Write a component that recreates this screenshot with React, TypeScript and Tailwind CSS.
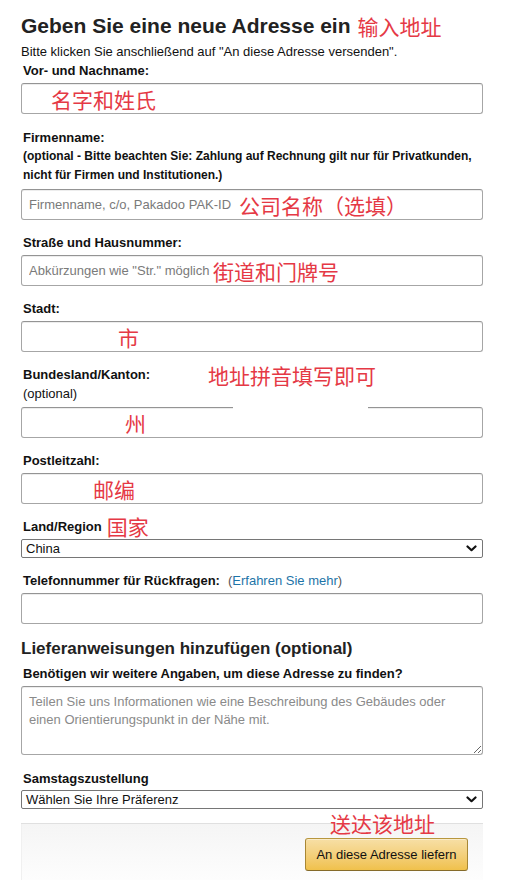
import React from "react";

const CN = "font-['Noto_Sans_CJK_SC','Noto_Sans',sans-serif] text-[#e53945] font-normal";

const inputCls =
  "block w-full h-[31px] rounded-[3px] border border-[#a6a6a6] border-t-[#949494] bg-white px-[7px] text-[13px] text-[#111] placeholder:text-[#7a7a7a] shadow-[inset_0_1px_0_rgba(0,0,0,0.07),0_1px_0_rgba(255,255,255,0.5)] outline-none";

function Chevron() {
  return (
    <svg width="11" height="7" viewBox="0 0 11 7" className="shrink-0">
      <polyline points="1.5,1.5 5.5,5.2 9.5,1.5" fill="none" stroke="#111" strokeWidth="2.2" strokeLinecap="round" strokeLinejoin="round" />
    </svg>
  );
}

function FakeSelect({ value, top = 4 }: { value: string; top?: number }) {
  return (
    <div
      className="flex h-[19px] items-center justify-between rounded-[2px] border border-[#767676] bg-white pl-[4px] pr-[5px] text-[13px] leading-[17px] text-[#111]"
      style={{ marginTop: top }}
    >
      <span>{value}</span>
      <Chevron />
    </div>
  );
}

function Field({
  label,
  placeholder,
  note,
  noteLeft,
}: {
  label: React.ReactNode;
  placeholder?: string;
  note?: string;
  noteLeft?: number;
}) {
  return (
    <div className="mt-[13px]">
      {label}
      <div className="relative mt-[3px]">
        <input className={inputCls} placeholder={placeholder} />
        {note && (
          <span
            className={`${CN} pointer-events-none absolute top-1/2 -translate-y-1/2 text-[21px] leading-[24px]`}
            style={{ left: noteLeft }}
          >
            {note}
          </span>
        )}
      </div>
    </div>
  );
}

const Lbl = ({ children }: { children: React.ReactNode }) => (
  <div className="pl-[2px] text-[13px] font-bold leading-[19px] text-[#111]">{children}</div>
);

export default function App() {
  return (
    <div className="relative min-h-[882px] w-[505px] bg-white pl-[21px] pr-[22px] font-['Liberation_Sans',Arial,sans-serif] text-[#111]">
      <h1 className="flex items-center pt-[14px] text-[21px] font-bold leading-[24px] text-[#222]">
        <span>Geben Sie eine neue Adresse ein</span>
        <span className={`${CN} ml-[7px] text-[21px] leading-[24px]`}>输入地址</span>
      </h1>
      <p className="mt-[6px] text-[13px] leading-[16px] text-[#111]">
        Bitte klicken Sie anschließend auf "An diese Adresse versenden".
      </p>

      <div className="mt-[1px]">
        <Lbl>Vor- und Nachname:</Lbl>
        <div className="relative mt-[3px]">
          <input className={inputCls} />
          <span className={`${CN} pointer-events-none absolute left-[30px] top-1/2 -translate-y-1/2 text-[21px] leading-[24px]`}>
            名字和姓氏
          </span>
        </div>
      </div>

      <div className="mt-[14px]">
        <Lbl>Firmenname:</Lbl>
        <div className="pl-[2px] text-[12px] font-bold leading-[19px] text-[#111]">
          (optional - Bitte beachten Sie: Zahlung auf Rechnung gilt nur für Privatkunden,
          <br />
          nicht für Firmen und Institutionen.)
        </div>
        <div className="relative mt-[4px]">
          <input className={inputCls} placeholder="Firmenname, c/o, Pakadoo PAK-ID" />
          <span className={`${CN} pointer-events-none absolute left-[218px] top-1/2 -translate-y-1/2 text-[21px] leading-[24px]`}>
            公司名称（选填）
          </span>
        </div>
      </div>

      <Field
        label={<Lbl>Straße und Hausnummer:</Lbl>}
        placeholder={'Abkürzungen wie "Str." möglich'}
        note="街道和门牌号"
        noteLeft={192}
      />
      <Field label={<Lbl>Stadt:</Lbl>} note="市" noteLeft={97} />

      <div className="relative mt-[13px]">
        <Lbl>Bundesland/Kanton:</Lbl>
        <div className="pl-[2px] text-[13px] leading-[19px] text-[#111]">(optional)</div>
        <span className={`${CN} absolute left-[187px] top-[-2px] text-[21px] leading-[24px]`}>
          地址拼音填写即可
        </span>
        <div className="relative mt-[4px]">
          <input className={inputCls} />
          <div className="absolute left-[212px] top-[-3px] h-[5px] w-[135px] bg-white" />
          <span className={`${CN} pointer-events-none absolute left-[104px] top-1/2 -translate-y-1/2 text-[21px] leading-[24px]`}>
            州
          </span>
        </div>
      </div>

      <Field label={<Lbl>Postleitzahl:</Lbl>} note="邮编" noteLeft={72} />

      <div className="mt-[13px]">
        <div className="flex items-center pl-[2px] text-[13px] font-bold leading-[19px]">
          <span>Land/Region</span>
          <span className={`${CN} ml-[5px] text-[21px] leading-[19px]`}>国家</span>
        </div>
        <FakeSelect value="China" top={3} />
      </div>

      <Field
        label={
          <div className="pl-[2px] text-[13px] leading-[19px]">
            <span className="font-bold">Telefonnummer für Rückfragen:</span>
            <span className="ml-[8px] text-[#555]">
              (<span className="text-[#1d74a8]">Erfahren Sie mehr</span>)
            </span>
          </div>
        }
      />

      <h2 className="mt-[13px] text-[17px] font-bold leading-[24px] text-[#222]">
        Lieferanweisungen hinzufügen (optional)
      </h2>
      <div className="mt-[3px]">
        <Lbl>Benötigen wir weitere Angaben, um diese Adresse zu finden?</Lbl>
        <textarea
          className="mt-[3px] block h-[69px] w-full rounded-[3px] border border-[#a6a6a6] border-t-[#949494] bg-white px-[7px] py-[6px] text-[13px] leading-[18px] text-[#111] placeholder:text-[#8a8a8a] shadow-[inset_0_1px_0_rgba(0,0,0,0.07)] outline-none"
          placeholder="Teilen Sie uns Informationen wie eine Beschreibung des Gebäudes oder einen Orientierungspunkt in der Nähe mit."
        />
      </div>

      <div className="mt-[14px]">
        <Lbl>Samstagszustellung</Lbl>
        <FakeSelect value="Wählen Sie Ihre Präferenz" top={2} />
      </div>

      <div className="relative mt-[14px] flex h-[57px] justify-end border-t border-[#e0e0e0] bg-gradient-to-b from-[#f5f5f5] to-[#fdfdfd] pr-[15px] pt-[14px] shadow-[inset_1px_0_0_#f0f0f0]">
        <span className={`${CN} absolute left-[309px] top-[-14px] text-[21px] leading-[26px]`}>送达该地址</span>
        <button className="h-[33px] w-[163px] rounded-[3px] border border-[#a88734] border-t-[#b8973e] border-b-[#846a29] bg-gradient-to-b from-[#f7dfa5] to-[#f0c14b] text-[13px] text-[#111] shadow-[inset_0_1px_0_rgba(255,255,255,0.4)]">
          An diese Adresse liefern
        </button>
      </div>
    </div>
  );
}
